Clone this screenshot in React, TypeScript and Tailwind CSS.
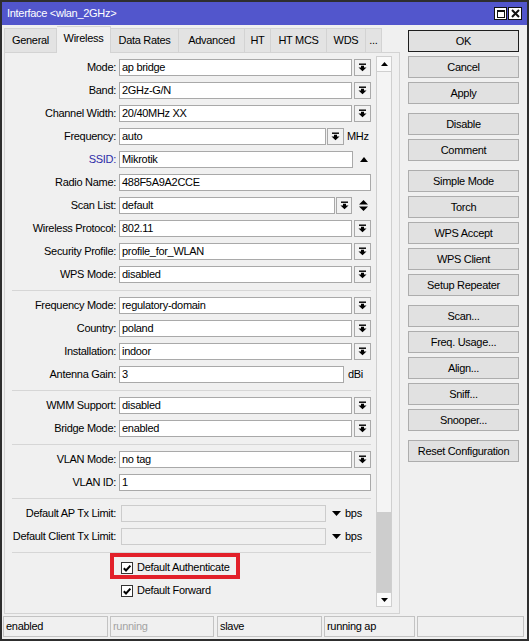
import type { ReactNode } from 'react';

function DropIcon() {
  return (
    <svg width="9" height="9" viewBox="0 0 9 9">
      <rect x="1" y="0.5" width="7" height="1.4" fill="#000" />
      <path d="M3 2.8h3v1.6h2.5L4.5 8.3 0.5 4.4H3z" fill="#000" />
    </svg>
  );
}

function DropBtn({ w = 'w-[17px]' }: { w?: string }) {
  return (
    <div className={`flex h-[17px] ${w} items-center justify-center border border-[#a9a9a9] bg-[#f2f2f2]`}>
      <DropIcon />
    </div>
  );
}

function Field({ w, value, disabled }: { w: string; value?: string; disabled?: boolean }) {
  return (
    <div
      className={`flex h-[17px] ${w} items-center pl-[2px] border ${
        disabled ? 'border-[#cccccc] bg-[#f0f0f0]' : 'border-[#a9a9a9] bg-white'
      }`}
    >
      {value}
    </div>
  );
}

function Row({ label, children, blue }: { label: string; children: ReactNode; blue?: boolean }) {
  return (
    <div className="flex h-[23px] items-center">
      <div className={`w-[114px] pr-[3px] text-right ${blue ? 'text-[#2c2ca8]' : ''}`}>{label}</div>
      {children}
    </div>
  );
}

function Combo({ label, value, blue }: { label: string; value: string; blue?: boolean }) {
  return (
    <Row label={label} blue={blue}>
      <Field w="w-[233px]" value={value} />
      <div className="ml-[2px]">
        <DropBtn />
      </div>
    </Row>
  );
}

function Sep() {
  return (
    <div className="flex h-[8px] items-center">
      <div className="ml-[7px] h-px w-[359px] bg-[#d6d6d6]" />
    </div>
  );
}

function Check({ label }: { label: string }) {
  return (
    <div className="flex h-[12px] items-center">
      <div className="flex h-[12px] w-[12px] items-center justify-center border border-[#333] bg-white">
        <svg width="10" height="10" viewBox="0 0 10 10">
          <path d="M1.8 5.2 4 7.5 8.4 2.6" stroke="#000" strokeWidth="2" fill="none" />
        </svg>
      </div>
      <span className="ml-[4px]">{label}</span>
    </div>
  );
}

function Btn({ label, primary }: { label: string; primary?: boolean }) {
  return (
    <div
      className={`flex h-[22px] w-[111px] items-center justify-center border bg-[#e1e1e1] ${
        primary ? 'border-[#1e1e1e]' : 'border-[#adadad]'
      }`}
    >
      {label}
    </div>
  );
}

const tabs: [string, string][] = [
  ['General', 'w-[53px]'],
  ['Wireless', 'w-[54px]'],
  ['Data Rates', 'w-[68px]'],
  ['Advanced', 'w-[66px]'],
  ['HT', 'w-[26px]'],
  ['HT MCS', 'w-[56px]'],
  ['WDS', 'w-[39px]'],
  ['...', 'w-[16px]'],
];

const groups = [
  ['OK', 'Cancel', 'Apply'],
  ['Disable', 'Comment'],
  ['Simple Mode', 'Torch', 'WPS Accept', 'WPS Client', 'Setup Repeater'],
  ['Scan...', 'Freq. Usage...', 'Align...', 'Sniff...', 'Snooper...'],
  ['Reset Configuration'],
];

export default function App() {
  return (
    <div className="h-[641px] w-[529px] border-2 border-[#2e2e2e] bg-[#f0f0f0] font-['Liberation_Sans',Arial,sans-serif] text-[11px] leading-none tracking-[-0.3px] text-black">
      {/* title bar */}
      <div className="flex h-[23px] items-center bg-[#5256cc] pl-[5px] pr-[5px] text-white">
        <span className="flex-1">Interface &lt;wlan_2GHz&gt;</span>
        <div className="flex gap-px">
          <div className="flex h-[13px] w-[13px] items-center justify-center border border-[#111] bg-white">
            <div className="h-[8px] w-[8px] border border-[#111] border-t-2" />
          </div>
          <div className="flex h-[13px] w-[14px] items-center justify-center border border-[#111] bg-white">
            <svg width="9" height="9" viewBox="0 0 9 9">
              <path d="M1 1 8 8M8 1 1 8" stroke="#111" strokeWidth="2" />
            </svg>
          </div>
        </div>
      </div>

      <div className="flex h-[590px]">
        {/* left: tabs + panel */}
        <div className="ml-[2px] flex w-[396px] flex-col pt-px pb-px">
          <div className="flex h-[26px] items-end">
            {tabs.map(([name, w], i) => {
              const active = name === 'Wireless';
              return (
                <div
                  key={name}
                  className={`flex ${w} items-center justify-center border-t border-r border-[#d3d3d3] ${
                    i === 0 ? 'border-l' : ''
                  } ${active ? 'relative z-10 -mb-px h-[27px] bg-[#f0f0f0] pb-[3px]' : 'h-[24px] bg-[#e3e3e3]'}`}
                >
                  {name}
                </div>
              );
            })}
          </div>
          <div className="flex flex-1 border border-[#d3d3d3]">
            <div className="w-[371px] pt-[3px]">
              <Combo label="Mode:" value="ap bridge" />
              <Combo label="Band:" value="2GHz-G/N" />
              <Combo label="Channel Width:" value="20/40MHz XX" />
              <Row label="Frequency:">
                <Field w="w-[207px]" value="auto" />
                <div className="ml-px">
                  <DropBtn />
                </div>
                <span className="ml-[3px]">MHz</span>
              </Row>
              <Row label="SSID:" blue>
                <Field w="w-[234px]" value="Mikrotik" />
                <svg className="ml-[7px]" width="8" height="5" viewBox="0 0 8 5">
                  <path d="M0 5 4 0 8 5z" fill="#000" />
                </svg>
              </Row>
              <Row label="Radio Name:">
                <Field w="w-[252px]" value="488F5A9A2CCE" />
              </Row>
              <Row label="Scan List:">
                <Field w="w-[216px]" value="default" />
                <div className="ml-px">
                  <DropBtn w="w-[16px]" />
                </div>
                <svg className="ml-[7px]" width="9" height="11" viewBox="0 0 9 11">
                  <path d="M0 4.5 4.5 0 9 4.5zM0 6.5h9L4.5 11z" fill="#000" />
                </svg>
              </Row>
              <Combo label="Wireless Protocol:" value="802.11" />
              <Combo label="Security Profile:" value="profile_for_WLAN" />
              <Combo label="WPS Mode:" value="disabled" />
              <Sep />
              <Combo label="Frequency Mode:" value="regulatory-domain" />
              <Combo label="Country:" value="poland" />
              <Combo label="Installation:" value="indoor" />
              <Row label="Antenna Gain:">
                <Field w="w-[225px]" value="3" />
                <span className="ml-[4px]">dBi</span>
              </Row>
              <Sep />
              <Combo label="WMM Support:" value="disabled" />
              <Combo label="Bridge Mode:" value="enabled" />
              <Sep />
              <Combo label="VLAN Mode:" value="no tag" />
              <Row label="VLAN ID:">
                <Field w="w-[252px]" value="1" />
              </Row>
              <Sep />
              {['Default AP Tx Limit:', 'Default Client Tx Limit:'].map((l) => (
                <Row key={l} label={l}>
                  <div className="ml-[2px]">
                    <Field w="w-[205px]" disabled />
                  </div>
                  <svg className="ml-[6px]" width="9" height="5" viewBox="0 0 9 5">
                    <path d="M0 0h9L4.5 5z" fill="#000" />
                  </svg>
                  <span className="ml-[4px]">bps</span>
                </Row>
              ))}
              <Sep />
              <div className="relative flex h-[23px] items-center pl-[116px]">
                <Check label="Default Authenticate" />
                <div className="absolute top-[-3px] left-[105px] h-[26px] w-[130px] border-[4px] border-[#e2202a]" />
              </div>
              <div className="flex h-[23px] items-center pl-[116px]">
                <Check label="Default Forward" />
              </div>
            </div>
            {/* scrollbar */}
            <div className="mt-[3px] mb-[6px] flex w-[16px] flex-col border-x border-[#cfcfcf] bg-[#f4f4f4]">
              <div className="flex h-[16px] items-center justify-center border-y border-[#cfcfcf] bg-[#fafafa]">
                <svg width="7" height="4" viewBox="0 0 7 4">
                  <path d="M0 4 3.5 0 7 4z" fill="#000" />
                </svg>
              </div>
              <div className="flex-1" />
              <div className="h-[80px] bg-[#cdcdcd]" />
              <div className="flex h-[15px] items-center justify-center border-y border-[#cfcfcf] bg-[#fafafa]">
                <svg width="7" height="4" viewBox="0 0 7 4">
                  <path d="M0 0h7L3.5 4z" fill="#000" />
                </svg>
              </div>
            </div>
          </div>
        </div>

        {/* right buttons */}
        <div className="ml-[8px] flex flex-col gap-[9px] pt-[5px]">
          {groups.map((g, gi) => (
            <div key={gi} className="flex flex-col gap-[4px]">
              {g.map((b) => (
                <Btn key={b} label={b} primary={b === 'OK'} />
              ))}
            </div>
          ))}
        </div>
      </div>

      {/* status bar */}
      <div className="flex h-[24px] pt-px pl-px">
        <div className="h-[21px] w-[105px] border border-[#c3c3c3] pl-[2px] leading-[19px]">enabled</div>
        <div className="ml-[2px] h-[21px] w-[104px] border border-[#c3c3c3] pl-[2px] leading-[19px] text-[#a3a3a3]">running</div>
        <div className="ml-[3px] h-[21px] w-[105px] border border-[#c3c3c3] pl-[2px] leading-[19px]">slave</div>
        <div className="ml-[2px] h-[21px] w-[91px] border border-[#c3c3c3] pl-[2px] leading-[19px]">running ap</div>
        <div className="ml-[2px] h-[21px] w-[107px] border border-[#c3c3c3]" />
      </div>
    </div>
  );
}
